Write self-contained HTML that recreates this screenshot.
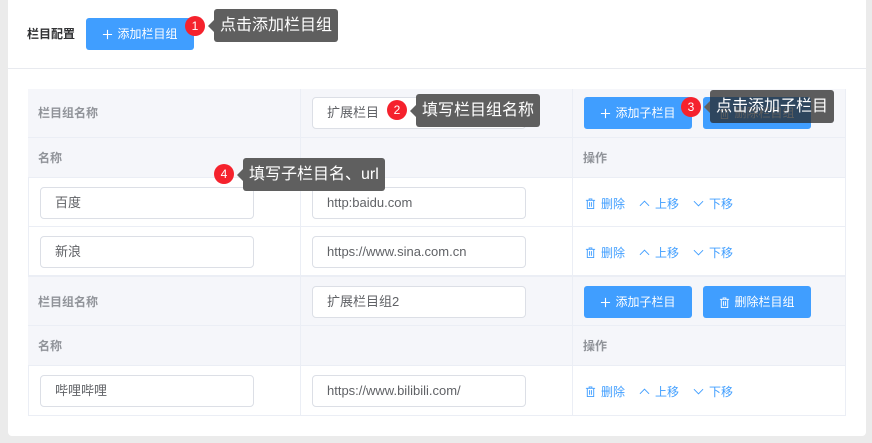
<!DOCTYPE html>
<html><head><meta charset="utf-8"><style>
*{box-sizing:border-box;margin:0;padding:0}
body{width:872px;height:443px;background:#ebebeb;font-family:"Liberation Sans","Noto Sans CJK SC",sans-serif;position:relative;overflow:hidden}
.abs{position:absolute}
.card{left:8px;top:-4px;width:858px;height:440px;background:#fff;border-radius:4px}
.hl{left:8px;top:68px;width:858px;height:1px;background:#e8eaef}
.btn{position:absolute;background:#409eff;color:#fff;font-size:12px;border-radius:3px;height:32px;line-height:32px;text-align:center;width:108px}
.btn svg{vertical-align:-2px;margin-right:4px}
.cell{position:absolute;border-right:1px solid #ebeef5;border-bottom:1px solid #ebeef5}
.gray{background:#f5f6fa}
.th{font-size:12px;color:#909399;font-weight:bold;padding-left:10px}
.inp{position:absolute;width:214px;height:32px;border:1px solid #dcdfe6;border-radius:4px;font-size:13px;color:#606266;line-height:30px;padding-left:14px;background:#fff}
.ops{position:absolute;font-size:12px;color:#409eff;left:585px;white-space:nowrap}
.ops span{margin-right:14px}
.ops svg{vertical-align:-1px;margin-right:5px}
.tip{position:absolute;background:#5f5f5f;color:#fff;font-size:16px;height:33px;line-height:33px;padding:0 6px;border-radius:3px}
.tip:before{content:"";position:absolute;left:-6px;top:11px;border:6px solid transparent;border-left:0;border-right-color:#5f5f5f}
.bd{position:absolute;width:20px;height:20px;border-radius:50%;background:#f5222d;color:#fff;font-size:12px;text-align:center;line-height:20px}
</style></head><body>
<svg width="0" height="0" style="position:absolute"><defs>
<symbol id="tr" viewBox="0 0 12 12"><path d="M1 2.5h10M4.5 2.5V1h3v1.5M2.5 2.5v9h7v-9M5 4.5v5M7 4.5v5" fill="none" stroke="currentColor" stroke-width="1"/></symbol>
<symbol id="up" viewBox="0 0 12 12"><path d="M1 8.5l5-5 5 5" fill="none" stroke="currentColor" stroke-width="1"/></symbol>
<symbol id="dn" viewBox="0 0 12 12"><path d="M1 3.5l5 5 5-5" fill="none" stroke="currentColor" stroke-width="1"/></symbol>
<symbol id="pl" viewBox="0 0 12 12"><path d="M6 1v10M1 6h10" fill="none" stroke="currentColor" stroke-width="1.2"/></symbol>
</defs></svg>
<div class="abs card"></div>
<div class="abs hl"></div>
<div class="abs" style="left:27px;top:25px;font-size:12px;font-weight:bold;color:#303133">栏目配置</div>
<div class="btn" style="left:86px;top:18px"><svg width="11" height="11"><use href="#pl"/></svg>添加栏目组</div>

<div class="abs" style="left:28px;top:89px;width:818px;height:327px;border-left:1px solid #ebeef5;border-top:1px solid #ebeef5"></div>
<div class="cell gray" style="left:28px;top:89px;width:273px;height:49px;line-height:49px"><div class="th">栏目组名称</div></div>
<div class="cell gray" style="left:301px;top:89px;width:272px;height:49px"></div>
<div class="cell gray" style="left:573px;top:89px;width:273px;height:49px"></div>
<div class="cell gray" style="left:28px;top:138px;width:273px;height:40px;line-height:40px"><div class="th">名称</div></div>
<div class="cell gray" style="left:301px;top:138px;width:272px;height:40px"></div>
<div class="cell gray" style="left:573px;top:138px;width:273px;height:40px;line-height:40px"><div class="th">操作</div></div>
<div class="cell" style="left:28px;top:178px;width:273px;height:49px"></div>
<div class="cell" style="left:301px;top:178px;width:272px;height:49px"></div>
<div class="cell" style="left:573px;top:178px;width:273px;height:49px"></div>
<div class="cell" style="left:28px;top:227px;width:273px;height:49px"></div>
<div class="cell" style="left:301px;top:227px;width:272px;height:49px"></div>
<div class="cell" style="left:573px;top:227px;width:273px;height:49px"></div>
<div class="cell gray" style="left:28px;top:276px;width:273px;height:50px;line-height:50px;border-top:1px solid #ebeef5"><div class="th">栏目组名称</div></div>
<div class="cell gray" style="left:301px;top:276px;width:272px;height:50px;border-top:1px solid #ebeef5"></div>
<div class="cell gray" style="left:573px;top:276px;width:273px;height:50px;border-top:1px solid #ebeef5"></div>
<div class="cell gray" style="left:28px;top:326px;width:273px;height:40px;line-height:40px"><div class="th">名称</div></div>
<div class="cell gray" style="left:301px;top:326px;width:272px;height:40px"></div>
<div class="cell gray" style="left:573px;top:326px;width:273px;height:40px;line-height:40px"><div class="th">操作</div></div>
<div class="cell" style="left:28px;top:366px;width:273px;height:50px"></div>
<div class="cell" style="left:301px;top:366px;width:272px;height:50px"></div>
<div class="cell" style="left:573px;top:366px;width:273px;height:50px"></div>

<div class="inp" style="left:312px;top:97px">扩展栏目</div>
<div class="btn" style="left:584px;top:97px"><svg width="11" height="11"><use href="#pl"/></svg>添加子栏目</div>
<div class="btn" style="left:703px;top:97px"><svg width="11" height="11"><use href="#tr"/></svg>删除栏目组</div>
<div class="inp" style="left:40px;top:187px">百度</div>
<div class="inp" style="left:312px;top:187px">http:baidu.com</div>
<div class="ops" style="top:195px"><span><svg width="11" height="11"><use href="#tr"/></svg>删除</span><span><svg width="11" height="11"><use href="#up"/></svg>上移</span><span><svg width="11" height="11"><use href="#dn"/></svg>下移</span></div>
<div class="inp" style="left:40px;top:236px">新浪</div>
<div class="inp" style="left:312px;top:236px">https://www.sina.com.cn</div>
<div class="ops" style="top:244px"><span><svg width="11" height="11"><use href="#tr"/></svg>删除</span><span><svg width="11" height="11"><use href="#up"/></svg>上移</span><span><svg width="11" height="11"><use href="#dn"/></svg>下移</span></div>
<div class="inp" style="left:312px;top:286px">扩展栏目组2</div>
<div class="btn" style="left:584px;top:286px"><svg width="11" height="11"><use href="#pl"/></svg>添加子栏目</div>
<div class="btn" style="left:703px;top:286px"><svg width="11" height="11"><use href="#tr"/></svg>删除栏目组</div>
<div class="inp" style="left:40px;top:375px">哔哩哔哩</div>
<div class="inp" style="left:312px;top:375px">https://www.bilibili.com/</div>
<div class="ops" style="top:383px"><span><svg width="11" height="11"><use href="#tr"/></svg>删除</span><span><svg width="11" height="11"><use href="#up"/></svg>上移</span><span><svg width="11" height="11"><use href="#dn"/></svg>下移</span></div>

<div class="bd" style="left:185px;top:16px">1</div>
<div class="tip" style="left:214px;top:9px">点击添加栏目组</div>
<div class="bd" style="left:387px;top:100px">2</div>
<div class="tip" style="left:416px;top:94px">填写栏目组名称</div>
<div class="bd" style="left:681px;top:97px">3</div>
<div class="tip" style="left:710px;top:90px;background:rgba(40,40,40,.75)">点击添加子栏目</div>
<div class="bd" style="left:214px;top:164px">4</div>
<div class="tip" style="left:243px;top:158px">填写子栏目名、url</div>
</body></html>
